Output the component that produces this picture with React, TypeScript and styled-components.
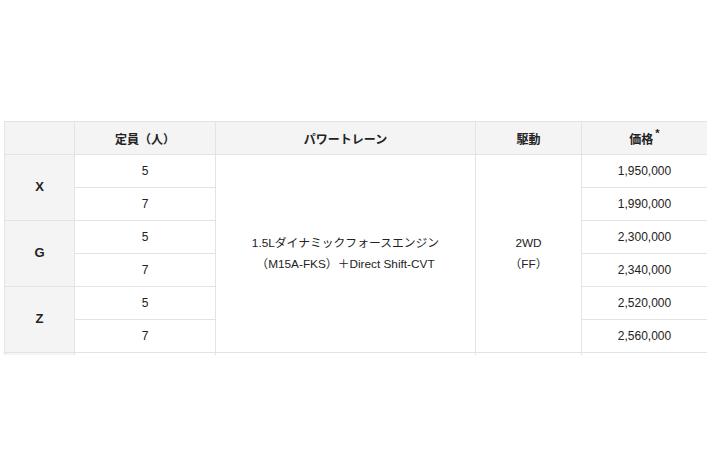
import styled, { createGlobalStyle } from "styled-components";

const GlobalStyle = createGlobalStyle`
  html, body {
    margin: 0;
    padding: 0;
    background: #ffffff;
  }
  body {
    font-family: "Liberation Sans", "Noto Sans CJK JP", sans-serif;
    color: #222222;
  }
`;

type Grade = {
  name: string;
  rows: { seats: number; price: string }[];
};

const grades: Grade[] = [
  { name: "X", rows: [{ seats: 5, price: "1,950,000" }, { seats: 7, price: "1,990,000" }] },
  { name: "G", rows: [{ seats: 5, price: "2,300,000" }, { seats: 7, price: "2,340,000" }] },
  { name: "Z", rows: [{ seats: 5, price: "2,520,000" }, { seats: 7, price: "2,560,000" }] },
];

const totalRows = grades.reduce((n, g) => n + g.rows.length, 0);

export default function App() {
  return (
    <>
      <GlobalStyle />
      <Page>
        <Clip>
          <SpecTable>
            <colgroup>
              <col style={{ width: 70 }} />
              <col style={{ width: 141 }} />
              <col style={{ width: 260 }} />
              <col style={{ width: 106 }} />
              <col style={{ width: 126 }} />
            </colgroup>
            <thead>
              <tr>
                <HeadCell />
                <HeadCell>定員（人）</HeadCell>
                <HeadCell>パワートレーン</HeadCell>
                <HeadCell>駆動</HeadCell>
                <HeadCell>
                  価格<Mark>*</Mark>
                </HeadCell>
              </tr>
            </thead>
            <tbody>
              {grades.map((g, gi) =>
                g.rows.map((r, ri) => (
                  <tr key={g.name + ri}>
                    {ri === 0 && <GradeCell rowSpan={g.rows.length}>{g.name}</GradeCell>}
                    <Cell>{r.seats}</Cell>
                    {gi === 0 && ri === 0 && (
                      <>
                        <Cell rowSpan={totalRows}>
                          <Multi>
                            1.5Lダイナミックフォースエンジン
                            <br />
                            （M15A-FKS）＋Direct Shift-CVT
                          </Multi>
                        </Cell>
                        <Cell rowSpan={totalRows}>
                          <Multi>
                            2WD
                            <br />
                            （FF）
                          </Multi>
                        </Cell>
                      </>
                    )}
                    <Cell>{r.price}</Cell>
                  </tr>
                ))
              )}
              <tr>
                <GradeCell />
                <Cell />
                <Cell />
                <Cell />
                <Cell />
              </tr>
            </tbody>
          </SpecTable>
        </Clip>
      </Page>
    </>
  );
}

const Page = styled.div`
  width: 710px;
  height: 473px;
  padding: 121px 3px 0 4px;
  box-sizing: border-box;
`;

const Clip = styled.div`
  height: 234px;
  overflow: hidden;
`;

const SpecTable = styled.table`
  width: 704px;
  border-collapse: collapse;
  table-layout: fixed;
  font-size: 12px;
`;

const Cell = styled.td`
  height: 32px;
  padding: 0 8px;
  border: 1px solid #e3e3e3;
  text-align: center;
  vertical-align: middle;
  line-height: 1.4;
  color: #222222;
  background: #ffffff;
`;

const HeadCell = styled.th`
  height: 32px;
  padding: 0 8px;
  border: 1px solid #e3e3e3;
  background: #f4f4f4;
  font-weight: 700;
  font-size: 12px;
  text-align: center;
  color: #222222;
`;

const GradeCell = styled(Cell)`
  background: #f4f4f4;
  font-weight: 700;
  font-size: 13px;
`;

const Multi = styled.span`
  display: inline-block;
  line-height: 21px;
  font-size: 11.8px;
`;

const Mark = styled.sup`
  font-size: 11px;
  vertical-align: top;
  position: relative;
  top: -2px;
  line-height: 1;
  margin-left: 2px;
`;
